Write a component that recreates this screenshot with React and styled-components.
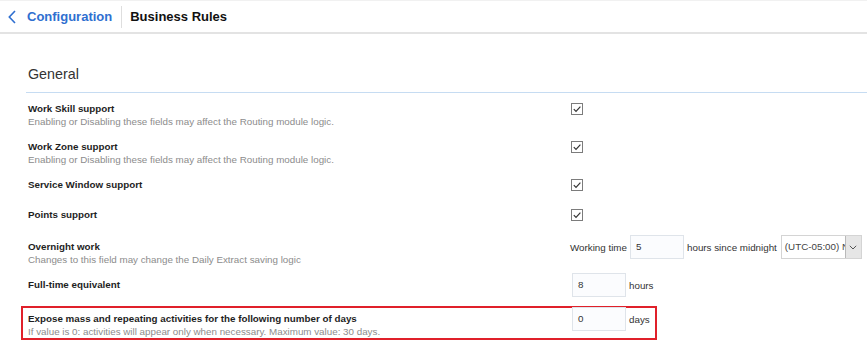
import React from "react";
import styled, { createGlobalStyle } from "styled-components";

const GlobalStyle = createGlobalStyle`
  body {
    margin: 0;
    background: #fff;
    font-family: "Liberation Sans", Arial, sans-serif;
    color: #222;
  }
`;

const Header = styled.header`
  display: flex;
  align-items: center;
  height: 34px;
  box-sizing: border-box;
  padding-left: 8px;
  border-top: 1px solid #f1f1f1;
  border-bottom: 2px solid #e3e3e3;
`;

const BackLink = styled.a`
  display: flex;
  align-items: center;
  gap: 11px;
  color: #2f6fd0;
  font-size: 13px;
  font-weight: bold;
  text-decoration: none;
  padding-right: 9px;
  border-right: 1px solid #dedede;
  height: 22px;
`;

const Title = styled.h1`
  margin: 0 0 0 8px;
  font-size: 13px;
  font-weight: bold;
  color: #111;
`;

const Section = styled.section`
  margin-left: 26px;
`;

const Heading = styled.h2`
  margin: 31px 0 5px;
  padding: 0 0 9px 2px;
  font-size: 14.3px;
  line-height: 18px;
  font-weight: normal;
  color: #333;
  border-bottom: 1px solid #c6dcf2;
`;

const Row = styled.div`
  display: flex;
  align-items: flex-start;
  box-sizing: border-box;
  min-height: 30px;
  padding: ${(p) => (p.roomy ? "6px 0 6px 2px" : "4px 0 8px 2px")};
  ${(p) =>
    p.highlight &&
    `
    width: 636px;
    min-height: 0;
    margin: 4px 0 0 -5px;
    padding: 4px 0 0 5px;
    border: 2px solid #e0202a;
  `}
`;

const Label = styled.div`
  width: 542px;
  flex: none;
`;

const LabelTitle = styled.div`
  font-size: 9.8px;
  line-height: 14px;
  font-weight: bold;
  color: #1e1e1e;
`;

const LabelHint = styled.div`
  font-size: 9.8px;
  line-height: 12px;
  color: #8c8c8c;
`;

const Control = styled.div`
  display: flex;
  align-items: center;
  gap: 3px;
  height: 14px;
  font-size: 9.8px;
  color: #333;
`;

const Box = styled.span`
  display: inline-flex;
  align-items: center;
  justify-content: center;
  width: 12px;
  height: 12px;
  box-sizing: border-box;
  margin-left: 1px;
  border: 1px solid #7c7c7c;
  background: #fff;
`;

const Input = styled.div`
  width: 54px;
  height: 24px;
  flex: none;
  box-sizing: border-box;
  padding-left: 5px;
  line-height: 22px;
  border: 1px solid #dfe4ea;
  background: #fbfcfe;
  color: #333;
  margin-left: ${(p) => p.offset || 0}px;
`;

const Select = styled.div`
  display: flex;
  width: 81px;
  height: 24px;
  box-sizing: border-box;
  border: 1px solid #d4d4d4;
  margin-left: 1px;
  background: #fff;
`;

const SelectText = styled.span`
  flex: 1;
  overflow: hidden;
  white-space: nowrap;
  padding-left: 3px;
  line-height: 22px;
  color: #444;
`;

const SelectButton = styled.span`
  width: 15px;
  display: flex;
  align-items: center;
  justify-content: center;
  background: #e6e6e6;
  border-left: 1px solid #b9b9b9;
`;

const Check = ({ on }) => (
  <Box>
    {on && (
      <svg width="10" height="10" viewBox="0 0 10 10">
        <path d="M1.8 5.2 L4 7.4 L8.4 2.6" fill="none" stroke="#333" strokeWidth="1.2" />
      </svg>
    )}
  </Box>
);

const rules = [
  { title: "Work Skill support", hint: "Enabling or Disabling these fields may affect the Routing module logic." },
  { title: "Work Zone support", hint: "Enabling or Disabling these fields may affect the Routing module logic." },
  { title: "Service Window support" },
  { title: "Points support" },
];

export default function App() {
  return (
    <>
      <GlobalStyle />
      <Header>
        <BackLink href="#">
          <svg width="8" height="14" viewBox="0 0 8 14">
            <path d="M7 1 L1.3 7 L7 13" fill="none" stroke="#2f6fd0" strokeWidth="1.6" />
          </svg>
          Configuration
        </BackLink>
        <Title>Business Rules</Title>
      </Header>

      <Section>
        <Heading>General</Heading>

        {rules.map((r) => (
          <Row key={r.title}>
            <Label>
              <LabelTitle>{r.title}</LabelTitle>
              {r.hint && <LabelHint>{r.hint}</LabelHint>}
            </Label>
            <Control>
              <Check on />
            </Control>
          </Row>
        ))}

        <Row roomy>
          <Label>
            <LabelTitle>Overnight work</LabelTitle>
            <LabelHint>Changes to this field may change the Daily Extract saving logic</LabelHint>
          </Label>
          <Control>
            Working time
            <Input>5</Input>
            hours since midnight
            <Select>
              <SelectText>(UTC-05:00) New York</SelectText>
              <SelectButton>
                <svg width="8" height="5" viewBox="0 0 8 5">
                  <path d="M0.8 0.8 L4 4 L7.2 0.8" fill="none" stroke="#555" strokeWidth="1" />
                </svg>
              </SelectButton>
            </Select>
          </Control>
        </Row>

        <Row roomy>
          <Label>
            <LabelTitle>Full-time equivalent</LabelTitle>
          </Label>
          <Control>
            <Input offset={2}>8</Input>
            hours
          </Control>
        </Row>

        <Row highlight>
          <Label>
            <LabelTitle>Expose mass and repeating activities for the following number of days</LabelTitle>
            <LabelHint>If value is 0: activities will appear only when necessary. Maximum value: 30 days.</LabelHint>
          </Label>
          <Control>
            <Input offset={2}>0</Input>
            days
          </Control>
        </Row>
      </Section>
    </>
  );
}
